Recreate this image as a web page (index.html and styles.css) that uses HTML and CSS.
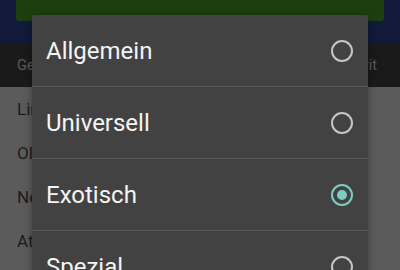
FILE: index.html
```html
<!DOCTYPE html>
<html>
<head>
<meta charset="utf-8">
<link rel="stylesheet" href="styles.css">
</head>
<body>
<div class="app">
  <header class="header">
    <div class="banner"></div>
  </header>
  <nav class="tabs">
    <span class="tab">Gewicht</span>
    <span class="tab">Favorit</span>
  </nav>
  <ul class="list">
    <li>Linien</li>
    <li>Olympisch</li>
    <li>Neue</li>
    <li>Atom</li>
  </ul>
</div>
<div class="dialog">
  <div class="row"><span class="label">Allgemein</span><span class="radio"></span></div>
  <div class="row"><span class="label">Universell</span><span class="radio"></span></div>
  <div class="row"><span class="label">Exotisch</span><span class="radio checked"></span></div>
  <div class="row"><span class="label">Spezial</span><span class="radio"></span></div>
</div>
</body>
</html>
```
FILE: styles.css
```css
html, body {
  margin: 0;
  padding: 0;
  width: 400px;
  height: 270px;
  overflow: hidden;
  background: #5b5b5b;
  font-family: Roboto, "Liberation Sans", sans-serif;
}
.app {
  display: flex;
  flex-direction: column;
}
.header {
  height: 43px;
  background: #111a3b;
  padding: 0 16px;
}
.banner {
  height: 21px;
  background: #1d3f10;
  border-radius: 0 0 3px 3px;
}
.tabs {
  height: 44px;
  background: #1a1a1a;
  display: flex;
  justify-content: space-between;
  align-items: center;
  padding: 0 23px 0 17px;
  color: #5a5a5a;
  font-size: 14.5px;
}
.list {
  list-style: none;
  margin: 0;
  padding: 0;
}
.list li {
  height: 44px;
  line-height: 44px;
  padding-left: 17px;
  color: #1b1b1b;
  font-size: 17px;
}
.dialog {
  position: absolute;
  left: 32px;
  top: 15px;
  width: 336px;
  background: #424242;
  border-radius: 2px;
  box-shadow: 0 2px 8px rgba(0,0,0,0.35);
}
.row {
  height: 71px;
  display: flex;
  align-items: center;
  justify-content: space-between;
  padding: 0 15px 0 14px;
  border-bottom: 1px solid #575757;
}
.label {
  color: #f4f4f4;
  font-size: 24px;
}
.radio {
  width: 18px;
  height: 18px;
  border: 2px solid #c6c6c6;
  border-radius: 50%;
  box-sizing: content-box;
  position: relative;
}
.radio.checked {
  border-color: #7ecdc3;
}
.radio.checked::after {
  content: "";
  position: absolute;
  left: 4px;
  top: 4px;
  width: 10px;
  height: 10px;
  border-radius: 50%;
  background: #7ecdc3;
}
```
